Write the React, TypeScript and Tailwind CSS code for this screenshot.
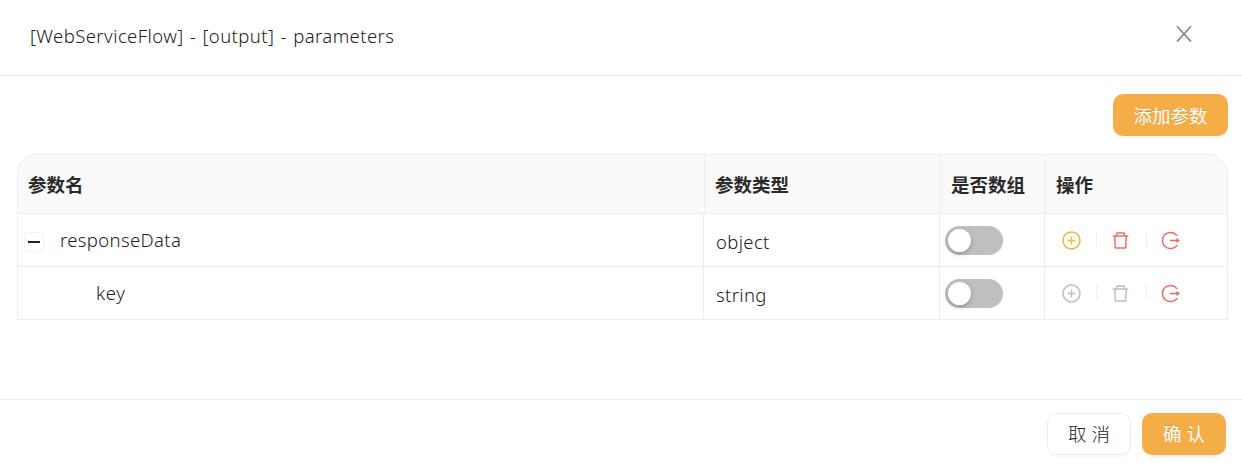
import { AiOutlineDelete, AiOutlineLogout, AiOutlinePlusCircle } from "react-icons/ai";

type Param = { name: string; type: string; nested: boolean };

const params: Param[] = [
  { name: "responseData", type: "object", nested: false },
  { name: "key", type: "string", nested: true },
];

function Toggle() {
  return (
    <button role="switch" aria-checked="false" className="flex h-[29px] w-[58px] items-center rounded-full bg-[#bfbfbf] pl-[3px]">
      <span className="size-[23px] rounded-full bg-white shadow-[0_2px_5px_rgba(0,35,11,0.25)]" />
    </button>
  );
}

function Divider() {
  return <span className="mb-[3px] h-4 w-px bg-[#f0f0f0]" />;
}

function Row({ param }: { param: Param }) {
  const muted = param.nested;
  return (
    <div className="grid h-[53px] grid-cols-[686px_236px_105px_182px] border-b border-[#ededed] text-[18.5px] leading-7 tracking-[0.35px]">
      <div className="flex items-center border-r border-[#ededed] pl-[6px]">
        {muted ? (
          <span className="pl-[72px] tracking-[0.6px]">{param.name}</span>
        ) : (
          <>
            <button className="mt-1 flex size-5 items-center justify-center rounded-[3px] border border-[#f3f3f3]">
              <span className="h-[1.5px] w-3 bg-[#222]" />
            </button>
            <span className="pl-4">{param.name}</span>
          </>
        )}
      </div>
      <div className="flex items-center border-r border-[#ededed] pt-1 pl-3">{param.type}</div>
      <div className="flex items-center border-r border-[#ededed] pt-px pl-[5px]">
        <Toggle />
      </div>
      <div className={`flex items-center pt-px pl-4 ${muted ? "text-[#bfbfbf]" : "text-[#efb73e]"}`}>
        <AiOutlinePlusCircle className="mr-[14px] size-[21px]" />
        <Divider />
        <AiOutlineDelete className={`mr-[15px] ml-[13px] size-[21px] ${muted ? "text-[#bfbfbf]" : "text-[#ee6b6b]"}`} />
        <Divider />
        <AiOutlineLogout className="ml-[13px] size-[21px] text-[#ee6b6b]" />
      </div>
    </div>
  );
}

export default function App() {
  return (
    <div className="flex h-[466px] w-[1242px] flex-col bg-white font-['Noto_Sans','Noto_Sans_CJK_SC',sans-serif] font-light text-[#222]">
      <header className="flex h-[76px] items-center justify-between border-b border-[#ededed] pr-[50px] pb-[3px] pl-[30px]">
        <h1 className="text-[18.5px] leading-7 tracking-[0.42px] [word-spacing:1px]">[WebServiceFlow] - [output] - parameters</h1>
        <svg viewBox="0 0 16 18" className="mb-[5px] h-[18px] w-4 fill-none stroke-[#888] stroke-[1.6]" role="img" aria-label="Close">
          <path d="M1 1.2L15 16.6M15 1.2L1 16.6" />
        </svg>
      </header>
      <main className="flex flex-1 flex-col pt-[18px] pr-[14px] pl-[17px]">
        <button className="h-[42px] w-[115px] self-end rounded-[10px] bg-[#f5ad47] pt-px text-[18.5px] font-normal text-white shadow-[0_3px_0_rgba(0,0,0,0.04)] [text-shadow:0_-1px_0_rgba(0,0,0,0.12)]">
          添加参数
        </button>
        <section className="mt-[18px] w-[1211px]">
          <div className="grid h-[60px] grid-cols-[687px_236px_105px_181px] overflow-hidden rounded-t-[20px] border border-[#ededed] bg-[#fafafa] text-[18.5px] font-bold text-[#2a2a2a] *:pt-[2px]">
            <div className="flex items-center border-r border-[#ededed] pl-[10px]">参数名</div>
            <div className="flex items-center border-r border-[#ededed] pl-[10px]">参数类型</div>
            <div className="flex items-center border-r border-[#ededed] pl-[10px]">是否数组</div>
            <div className="flex items-center pl-[10px]">操作</div>
          </div>
          <div className="border-x border-[#ededed]">
            {params.map((p) => (
              <Row key={p.name} param={p} />
            ))}
          </div>
        </section>
      </main>
      <footer className="flex h-[67px] justify-end gap-[11px] border-t border-[#ededed] pt-[13px] pr-4 text-[18.5px]">
        <button className="h-[42px] w-[84px] rounded-[10px] border border-[#ededed] bg-white shadow-[0_3px_0_rgba(0,0,0,0.015)]">取 消</button>
        <button className="h-[42px] w-[84px] rounded-[10px] bg-[#f5ad47] font-normal text-white shadow-[0_3px_0_rgba(0,0,0,0.04)] [text-shadow:0_-1px_0_rgba(0,0,0,0.12)]">确 认</button>
      </footer>
    </div>
  );
}
